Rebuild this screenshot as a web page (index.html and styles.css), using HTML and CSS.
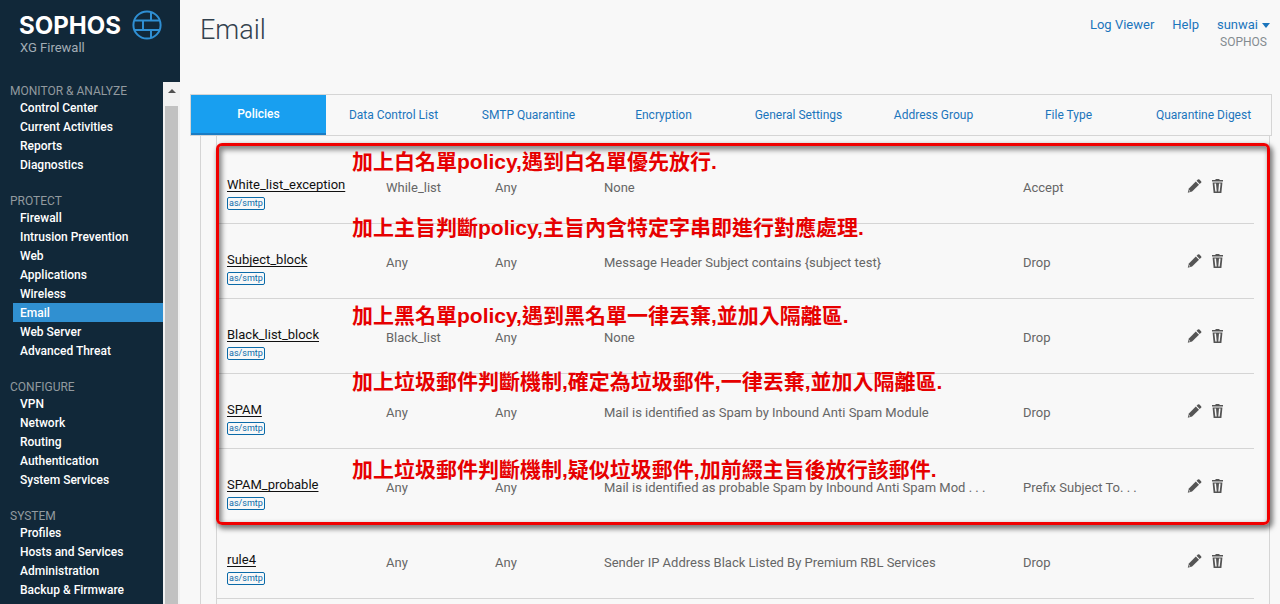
FILE: index.html
```html
<!DOCTYPE html>
<html lang="en">
<head>
    <meta charset="UTF-8">
    <meta name="viewport" content="width=device-width, initial-scale=1.0">
    <title>Email - XG Firewall</title>
    <link rel="stylesheet" href="styles.css">
</head>
<body>

    <!-- Icon shapes used in every table row -->
    <svg class="sprite" aria-hidden="true">
        <symbol id="icon-edit" viewBox="0 0 15 15">
            <path d="M0.3 14.7l1.2-4.6 7.4-7.3 3.4 3.4-7.4 7.3z"/>
            <path d="M9.7 2l1.4-1.4a1.2 1.2 0 0 1 1.7 0l1.7 1.7a1.2 1.2 0 0 1 0 1.7l-1.4 1.4z"/>
            <path class="cut" d="M2 11.9l1.1 1.1-1.2.3-.2-.2z"/>
        </symbol>
        <symbol id="icon-delete" viewBox="0 0 11 14">
            <path d="M3.5 0h4v1H11v1.6H0V1h3.5z"/>
            <path d="M.6 3.6h9.8L9.4 14H1.6z"/>
            <path class="cut" d="M2.4 4.6h1.6l.7 8H3.3zM8.6 4.6H7l-.7 8h1.4z"/>
        </symbol>
    </svg>

    <div class="app">
        <aside class="sidebar">
            <div class="brand">
                <div class="brand-text">
                    <div class="brand-name">SOPHOS</div>
                    <div class="brand-product">XG Firewall</div>
                </div>
                <svg class="brand-icon" viewBox="0 0 30 30" aria-hidden="true">
                    <circle cx="15" cy="15" r="13.6"/>
                    <path d="M3 10.5h24M3 20h24M19 2v8.500M11 10.500V20M19 20v8"/>
                </svg>
            </div>

            <div class="menu-wrap">
                <nav class="menu">
                    <h2>MONITOR &amp; ANALYZE</h2>
                    <ul>
                        <li><a href="#">Control Center</a></li>
                        <li><a href="#">Current Activities</a></li>
                        <li><a href="#">Reports</a></li>
                        <li><a href="#">Diagnostics</a></li>
                    </ul>
                    <h2>PROTECT</h2>
                    <ul>
                        <li><a href="#">Firewall</a></li>
                        <li><a href="#">Intrusion Prevention</a></li>
                        <li><a href="#">Web</a></li>
                        <li><a href="#">Applications</a></li>
                        <li><a href="#">Wireless</a></li>
                        <li><a href="#" class="active">Email</a></li>
                        <li><a href="#">Web Server</a></li>
                        <li><a href="#">Advanced Threat</a></li>
                    </ul>
                    <h2>CONFIGURE</h2>
                    <ul>
                        <li><a href="#">VPN</a></li>
                        <li><a href="#">Network</a></li>
                        <li><a href="#">Routing</a></li>
                        <li><a href="#">Authentication</a></li>
                        <li><a href="#">System Services</a></li>
                    </ul>
                    <h2>SYSTEM</h2>
                    <ul>
                        <li><a href="#">Profiles</a></li>
                        <li><a href="#">Hosts and Services</a></li>
                        <li><a href="#">Administration</a></li>
                        <li><a href="#">Backup &amp; Firmware</a></li>
                    </ul>
                </nav>
                <div class="scrollbar">
                    <div class="scroll-up"></div>
                    <div class="scroll-thumb"></div>
                </div>
            </div>
        </aside>

        <main class="main">
            <header class="header">
                <h1>Email</h1>
                <div class="account">
                    <div class="account-links">
                        <a href="#">Log Viewer</a>
                        <a href="#">Help</a>
                        <button class="user">sunwai</button>
                    </div>
                    <div class="company">SOPHOS</div>
                </div>
            </header>

            <nav class="tabs">
                <a href="#" class="active">Policies</a>
                <a href="#">Data Control List</a>
                <a href="#">SMTP Quarantine</a>
                <a href="#">Encryption</a>
                <a href="#">General Settings</a>
                <a href="#">Address Group</a>
                <a href="#">File Type</a>
                <a href="#">Quarantine Digest</a>
            </nav>

            <div class="content">
                <div class="panel">
                    <table class="policies">
                        <colgroup>
                            <col class="col-name">
                            <col class="col-address">
                            <col class="col-address">
                            <col>
                            <col class="col-action">
                            <col class="col-manage">
                        </colgroup>
                        <tbody>
                            <tr>
                                <td class="name"><a href="#">White_list_exception</a><span class="tag">as/smtp</span></td>
                                <td>While_list</td>
                                <td>Any</td>
                                <td>None</td>
                                <td>Accept</td>
                                <td class="manage">
                                    <button aria-label="Edit"><svg class="edit"><use href="#icon-edit"/></svg></button>
                                    <button aria-label="Delete"><svg class="delete"><use href="#icon-delete"/></svg></button>
                                </td>
                            </tr>
                            <tr>
                                <td class="name"><a href="#">Subject_block</a><span class="tag">as/smtp</span></td>
                                <td>Any</td>
                                <td>Any</td>
                                <td>Message Header Subject contains {subject test}</td>
                                <td>Drop</td>
                                <td class="manage">
                                    <button aria-label="Edit"><svg class="edit"><use href="#icon-edit"/></svg></button>
                                    <button aria-label="Delete"><svg class="delete"><use href="#icon-delete"/></svg></button>
                                </td>
                            </tr>
                            <tr>
                                <td class="name"><a href="#">Black_list_block</a><span class="tag">as/smtp</span></td>
                                <td>Black_list</td>
                                <td>Any</td>
                                <td>None</td>
                                <td>Drop</td>
                                <td class="manage">
                                    <button aria-label="Edit"><svg class="edit"><use href="#icon-edit"/></svg></button>
                                    <button aria-label="Delete"><svg class="delete"><use href="#icon-delete"/></svg></button>
                                </td>
                            </tr>
                            <tr>
                                <td class="name"><a href="#">SPAM</a><span class="tag">as/smtp</span></td>
                                <td>Any</td>
                                <td>Any</td>
                                <td>Mail is identified as Spam by Inbound Anti Spam Module</td>
                                <td>Drop</td>
                                <td class="manage">
                                    <button aria-label="Edit"><svg class="edit"><use href="#icon-edit"/></svg></button>
                                    <button aria-label="Delete"><svg class="delete"><use href="#icon-delete"/></svg></button>
                                </td>
                            </tr>
                            <tr>
                                <td class="name"><a href="#">SPAM_probable</a><span class="tag">as/smtp</span></td>
                                <td>Any</td>
                                <td>Any</td>
                                <td>Mail is identified as probable Spam by Inbound Anti Spam Mod . . .</td>
                                <td>Prefix Subject To. . .</td>
                                <td class="manage">
                                    <button aria-label="Edit"><svg class="edit"><use href="#icon-edit"/></svg></button>
                                    <button aria-label="Delete"><svg class="delete"><use href="#icon-delete"/></svg></button>
                                </td>
                            </tr>
                            <tr>
                                <td class="name"><a href="#">rule4</a><span class="tag">as/smtp</span></td>
                                <td>Any</td>
                                <td>Any</td>
                                <td>Sender IP Address Black Listed By Premium RBL Services</td>
                                <td>Drop</td>
                                <td class="manage">
                                    <button aria-label="Edit"><svg class="edit"><use href="#icon-edit"/></svg></button>
                                    <button aria-label="Delete"><svg class="delete"><use href="#icon-delete"/></svg></button>
                                </td>
                            </tr>
                        </tbody>
                    </table>

                    <!-- Red frame and notes over the first five rules -->
                    <div class="highlight" lang="zh-Hant">
                        <p class="note note-1">加上白名單policy,遇到白名單優先放行.</p>
                        <p class="note note-2">加上主旨判斷policy,主旨內含特定字串即進行對應處理.</p>
                        <p class="note note-3">加上黑名單policy,遇到黑名單一律丟棄,並加入隔離區.</p>
                        <p class="note note-4">加上垃圾郵件判斷機制,確定為垃圾郵件,一律丟棄,並加入隔離區.</p>
                        <p class="note note-5">加上垃圾郵件判斷機制,疑似垃圾郵件,加前綴主旨後放行該郵件.</p>
                    </div>
                </div>
            </div>
        </main>
    </div>

</body>
</html>
```
FILE: styles.css
```css
* {
    box-sizing: border-box;
}
body {
    margin: 0;
    font-family: Roboto, "Liberation Sans", sans-serif;
    font-size: 13px;
    line-height: 18px;
    color: #666;
    background: #f8f8f8;
}
a {
    text-decoration: none;
}
button {
    padding: 0;
    border: none;
    background: none;
    font: inherit;
    cursor: pointer;
}
.sprite {
    display: none;
}
.app {
    display: flex;
    height: 100vh;
    overflow: hidden;
}

/* Sidebar */
.sidebar {
    display: flex;
    flex-direction: column;
    flex: 0 0 180px;
    background: #112839;
}
.brand {
    display: flex;
    flex: 0 0 82px;
    gap: 11px;
    padding: 10px 0 0 19px;
}
.brand-name {
    padding-top: 4px;
    font-family: Inter, sans-serif;
    font-size: 24px;
    font-weight: bold;
    line-height: 24px;
    color: #fff;
}
.brand-product {
    padding: 1px 0 0 1px;
    color: #a3adb5;
}
.brand-icon {
    width: 30px;
    height: 30px;
    fill: none;
    stroke: #2f8fd3;
    stroke-width: 2;
}
.menu-wrap {
    display: flex;
    flex: 1;
    min-height: 0;
}
.menu {
    flex: 1;
    overflow: hidden;
}
.menu h2 {
    margin: 0;
    padding: 2px 0 0 10px;
    font-size: 12px;
    font-weight: normal;
    line-height: 14px;
    color: #929a9f;
}
.menu ul {
    margin: 0 0 18px;
    padding: 0 0 0 13px;
    list-style: none;
}
.menu a {
    display: block;
    padding: 2px 0 0 7px;
    font-size: 12px;
    font-weight: 500;
    line-height: 17px;
    color: #fff;
}
.menu a.active {
    background: #3090d1;
}
.scrollbar {
    display: flex;
    flex-direction: column;
    flex: 0 0 17px;
    background: #f1f1f1;
}
.scroll-up {
    display: flex;
    align-items: center;
    justify-content: center;
    height: 24px;
    padding-bottom: 6px;
}
.scroll-up::before {
    content: "";
    border: 4px solid transparent;
    border-top: none;
    border-bottom-color: #505050;
}
.scroll-thumb {
    flex: 1;
    margin: 0 2px;
    background: #c1c1c1;
}

/* Page header */
.main {
    flex: 1;
    min-width: 0;
    padding: 0 8px 0 10px;
}
.header {
    display: flex;
    justify-content: space-between;
    height: 94px;
    padding: 15px 2px 0 10px;
}
.header h1 {
    margin: 0;
    font-size: 27px;
    font-weight: 300;
    line-height: 30px;
    color: #33414d;
}
.account {
    padding-top: 1px;
}
.account-links {
    display: flex;
    gap: 18px;
}
.account-links a,
.user {
    color: #1b75bc;
}
.user {
    display: flex;
    align-items: center;
    gap: 4px;
}
.user::after {
    content: "";
    border: 4px solid transparent;
    border-top: 5px solid #1b75bc;
    border-bottom: none;
}
.company {
    padding-right: 3px;
    font-size: 12px;
    line-height: 16px;
    text-align: right;
    color: #848b90;
}

/* Tabs */
.tabs {
    display: flex;
    border: 1px solid #d5d5d5;
}
.tabs a {
    flex: 1 1 0;
    padding: 1px 0 0;
    font-size: 12px;
    line-height: 39px;
    text-align: center;
    color: #1b75bc;
}
.tabs a.active {
    padding: 0;
    border-bottom: 2px solid #1a7cc4;
    font-weight: 500;
    line-height: 38px;
    color: #fff;
    background: #189ff0;
}

/* Policy list */
.content {
    margin: 0 2px 0 10px;
    padding: 0 0 0 15px;
    border-left: 1px solid #d5d5d5;
}
.panel {
    position: relative;
    padding: 13px 15px 20px 0;
    border: 1px solid #d5d5d5;
    border-top: none;
}
.policies {
    width: 100%;
    table-layout: fixed;
    border-spacing: 0;
}
.col-name {
    width: 159px;
}
.col-address {
    width: 109px;
}
.col-action {
    width: 163px;
}
.col-manage {
    width: 78px;
}
.policies td {
    height: 75px;
    padding: 30px 0 0 10px;
    border-bottom: 1px solid #d5d5d5;
    vertical-align: top;
    white-space: nowrap;
}
.policies td.name {
    padding-top: 27px;
}
.name a {
    display: table;
    color: #111;
    text-decoration: underline;
    text-underline-offset: 2px;
    text-decoration-skip-ink: none;
}
.tag {
    display: table;
    margin-top: 3px;
    padding: 0 1px;
    border: 1px solid #0a6aa8;
    border-radius: 2px;
    font-size: 9px;
    line-height: 11px;
    color: #0a6aa8;
}
.policies td.manage {
    padding-left: 11px;
}
.policies button {
    margin-right: 7px;
}
.manage svg {
    display: block;
    height: 14px;
    fill: #555;
}
.manage .edit {
    width: 15px;
}
.manage .delete {
    width: 11px;
}
.manage .cut,
.cut {
    fill: #f8f8f8;
}

/* Highlight frame */
.highlight {
    position: absolute;
    top: 7px;
    right: -1px;
    left: -1px;
    height: 382px;
    border: 3px solid #f00000;
    border-radius: 6px;
    box-shadow: 2px 3px 5px 1px rgba(0, 0, 0, 0.5), inset 2px 3px 5px 1px rgba(0, 0, 0, 0.45);
    pointer-events: none;
}
.note {
    position: absolute;
    left: 133px;
    margin: 0;
    font-family: "Liberation Sans", "Noto Sans CJK TC", sans-serif;
    font-size: 21px;
    font-weight: bold;
    line-height: 24px;
    white-space: nowrap;
    color: #e60000;
}
.note-1 { top: 4px; }
.note-2 { top: 70px; }
.note-3 { top: 158px; }
.note-4 { top: 224px; }
.note-5 { top: 312px; }
```
